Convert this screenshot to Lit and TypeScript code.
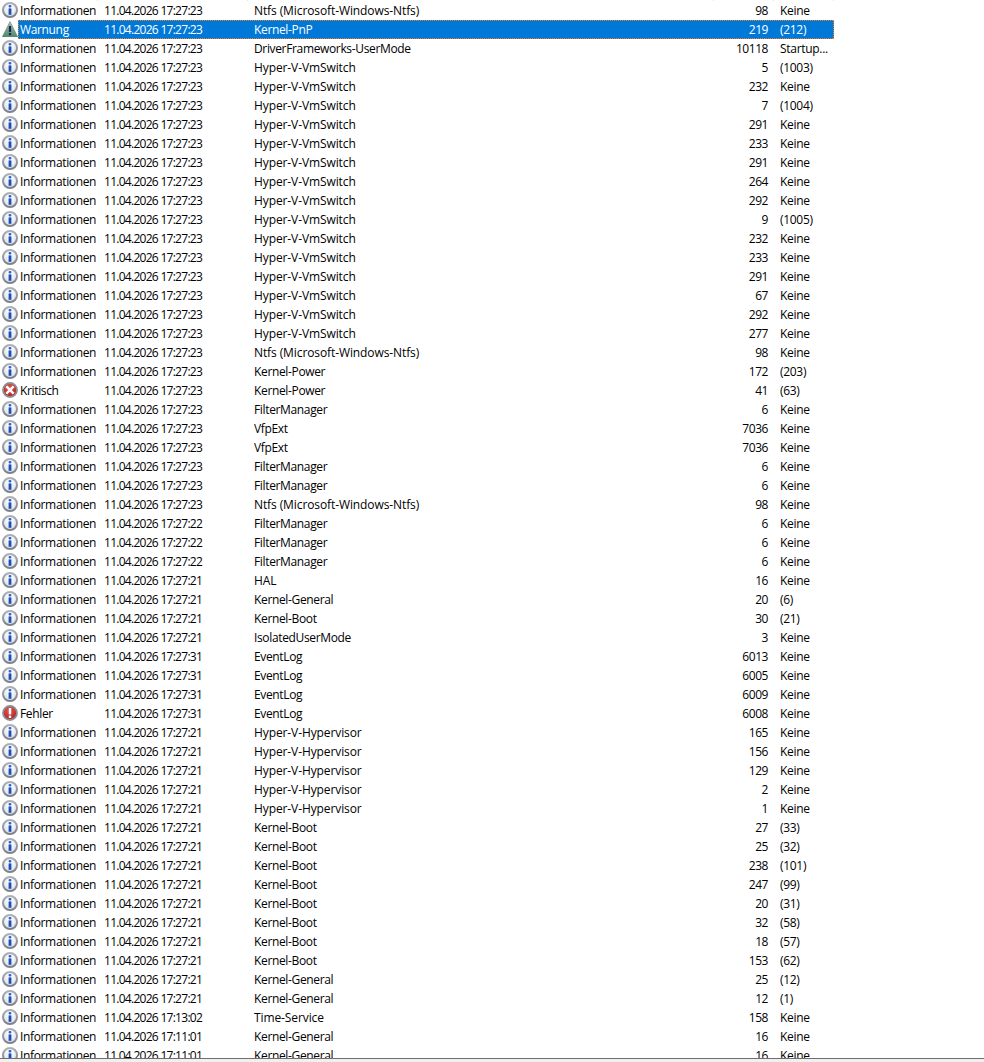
import { LitElement, html, css, svg } from "lit";
import { customElement } from "lit/decorators.js";

type Level = "i" | "w" | "c" | "e";
type Row = [Level, string, string, string, string];

const LABEL: Record<Level, string> = { i: "Informationen", w: "Warnung", c: "Kritisch", e: "Fehler" };
const HV = "Hyper-V-VmSwitch";
const NTFS = "Ntfs (Microsoft-Windows-Ntfs)";
const FM = "FilterManager";
const HY = "Hyper-V-Hypervisor";
const KB = "Kernel-Boot";
const KG = "Kernel-General";
const K = "Keine";
const LOOSE = new Set([HV, NTFS, HY, "Time-Service", "HAL"]);

const rows: Row[] = [
  ["i", "17:27:23", NTFS, "98", K],
  ["w", "17:27:23", "Kernel-PnP", "219", "(212)"],
  ["i", "17:27:23", "DriverFrameworks-UserMode", "10118", "Startup..."],
  ["i", "17:27:23", HV, "5", "(1003)"],
  ["i", "17:27:23", HV, "232", K],
  ["i", "17:27:23", HV, "7", "(1004)"],
  ["i", "17:27:23", HV, "291", K],
  ["i", "17:27:23", HV, "233", K],
  ["i", "17:27:23", HV, "291", K],
  ["i", "17:27:23", HV, "264", K],
  ["i", "17:27:23", HV, "292", K],
  ["i", "17:27:23", HV, "9", "(1005)"],
  ["i", "17:27:23", HV, "232", K],
  ["i", "17:27:23", HV, "233", K],
  ["i", "17:27:23", HV, "291", K],
  ["i", "17:27:23", HV, "67", K],
  ["i", "17:27:23", HV, "292", K],
  ["i", "17:27:23", HV, "277", K],
  ["i", "17:27:23", NTFS, "98", K],
  ["i", "17:27:23", "Kernel-Power", "172", "(203)"],
  ["c", "17:27:23", "Kernel-Power", "41", "(63)"],
  ["i", "17:27:23", FM, "6", K],
  ["i", "17:27:23", "VfpExt", "7036", K],
  ["i", "17:27:23", "VfpExt", "7036", K],
  ["i", "17:27:23", FM, "6", K],
  ["i", "17:27:23", FM, "6", K],
  ["i", "17:27:23", NTFS, "98", K],
  ["i", "17:27:22", FM, "6", K],
  ["i", "17:27:22", FM, "6", K],
  ["i", "17:27:22", FM, "6", K],
  ["i", "17:27:21", "HAL", "16", K],
  ["i", "17:27:21", KG, "20", "(6)"],
  ["i", "17:27:21", KB, "30", "(21)"],
  ["i", "17:27:21", "IsolatedUserMode", "3", K],
  ["i", "17:27:31", "EventLog", "6013", K],
  ["i", "17:27:31", "EventLog", "6005", K],
  ["i", "17:27:31", "EventLog", "6009", K],
  ["e", "17:27:31", "EventLog", "6008", K],
  ["i", "17:27:21", HY, "165", K],
  ["i", "17:27:21", HY, "156", K],
  ["i", "17:27:21", HY, "129", K],
  ["i", "17:27:21", HY, "2", K],
  ["i", "17:27:21", HY, "1", K],
  ["i", "17:27:21", KB, "27", "(33)"],
  ["i", "17:27:21", KB, "25", "(32)"],
  ["i", "17:27:21", KB, "238", "(101)"],
  ["i", "17:27:21", KB, "247", "(99)"],
  ["i", "17:27:21", KB, "20", "(31)"],
  ["i", "17:27:21", KB, "32", "(58)"],
  ["i", "17:27:21", KB, "18", "(57)"],
  ["i", "17:27:21", KB, "153", "(62)"],
  ["i", "17:27:21", KG, "25", "(12)"],
  ["i", "17:27:21", KG, "12", "(1)"],
  ["i", "17:13:02", "Time-Service", "158", K],
  ["i", "17:11:01", KG, "16", K],
  ["i", "17:11:01", KG, "16", K],
];

const defs = svg`
  <defs>
    <linearGradient id="ring" x1="0" y1="0" x2="0" y2="1">
      <stop offset="0" stop-color="#aeb1b5" /><stop offset="1" stop-color="#7c8085" />
    </linearGradient>
    <radialGradient id="face" cx=".5" cy=".3" r=".75">
      <stop offset="0" stop-color="#ffffff" /><stop offset="1" stop-color="#d5dcec" />
    </radialGradient>
    <linearGradient id="tri" x1="0" y1="0" x2="0" y2="1">
      <stop offset="0" stop-color="#b4c0aa" /><stop offset="1" stop-color="#4a8a6a" />
    </linearGradient>
    <radialGradient id="red" cx=".45" cy=".35" r=".7">
      <stop offset="0" stop-color="#e8584f" /><stop offset="1" stop-color="#a81c1c" />
    </radialGradient>
  </defs>`;

function icon(l: Level) {
  let body;
  if (l === "i") {
    body = svg`
      <circle cx="8" cy="8" r="7" fill="url(#face)" stroke="url(#ring)" stroke-width="2" />
      <rect x="6.6" y="3" width="2.8" height="2.6" rx="1.1" fill="#2a62c8" />
      <rect x="6.6" y="6.4" width="2.8" height="6.4" fill="#1c4fb4" />`;
  } else if (l === "w") {
    body = svg`
      <path d="M8 .6 15.8 16H.2Z" fill="url(#tri)" stroke="#6a8c7a" stroke-width=".6" stroke-linejoin="round" />
      <rect x="6.9" y="5" width="2.2" height="6" fill="#14265a" />
      <rect x="6.9" y="12" width="2.2" height="2.2" fill="#14265a" />`;
  } else if (l === "c") {
    body = svg`
      <circle cx="8" cy="8" r="7" fill="url(#red)" stroke="#8b8f94" stroke-width="1.8" />
      <path d="M5.2 5.2l5.6 5.6M10.8 5.2l-5.6 5.6" stroke="#fff" stroke-width="2.4" stroke-linecap="square" />`;
  } else {
    body = svg`
      <circle cx="8" cy="8" r="7" fill="url(#red)" stroke="#8b8f94" stroke-width="1.8" />
      <rect x="6.8" y="3" width="2.4" height="6.4" fill="#fff" />
      <rect x="6.8" y="10.6" width="2.4" height="2.4" fill="#fff" />`;
  }
  return html`<svg class="ico" width="16" height="16" viewBox="0 0 16 16">${body}</svg>`;
}

@customElement("app-root")
export class AppRoot extends LitElement {
  static styles = css`
    :host {
      display: flex;
      flex-direction: column;
      width: 984px;
      height: 1062px;
      background: #fff;
      font-family: "Open Sans", "Noto Sans", sans-serif;
      font-size: 12px;
      color: #000;
      overflow: hidden;
    }
    .defs { position: absolute; width: 0; height: 0; }
    .list {
      flex: 1;
      min-height: 0;
      overflow: hidden;
      border-bottom: 1px solid #6e6e6e;
    }
    .ticks {
      display: grid;
      grid-template-columns: 98px 150px 466px 60px 60px;
      width: 834px;
      height: 1px;
    }
    .ticks i { border-right: 1px solid #e4e4e4; }
    .foot { height: 3px; background: #f0f0f0; flex: none; }
    .row {
      display: flex;
      height: 19px;
      line-height: 19px;
      padding-left: 2px;
    }
    .ico { flex: none; width: 16px; height: 16px; margin-top: 1px; }
    .cells {
      width: 816px;
      display: grid;
      grid-template-columns: 86px 150px 386px 140px 54px;
      white-space: nowrap;
    }
    .cells span { overflow: hidden; }
    .lvl { padding-left: 2px; letter-spacing: -0.35px; }
    .date { letter-spacing: -0.72px; }
    .src { letter-spacing: -0.35px; }
    .src.loose { letter-spacing: -0.1px; }
    .id { text-align: right; letter-spacing: -0.45px; padding-right: 12px; }
    .task { letter-spacing: -0.3px; }
    .sel .cells {
      color: #fff;
      background:
        repeating-linear-gradient(90deg, #f08020 0 1px, transparent 1px 2px) 0 0 / 100% 1px no-repeat,
        repeating-linear-gradient(90deg, #f08020 0 1px, transparent 1px 2px) 0 100% / 100% 1px no-repeat,
        repeating-linear-gradient(0deg, #f08020 0 1px, transparent 1px 2px) 0 0 / 1px 100% no-repeat,
        repeating-linear-gradient(0deg, #f08020 0 1px, transparent 1px 2px) 100% 0 / 1px 100% no-repeat,
        #0078d7;
    }
  `;

  render() {
    return html`
      <svg class="defs">${defs}</svg>
      <div class="list">
        <div class="ticks"><i></i><i></i><i></i><i></i><i></i></div>
        ${rows.map(
          ([l, t, src, id, task], i) => html`
            <div class="row ${i === 1 ? "sel" : ""}">
              ${icon(l)}
              <div class="cells">
                <span class="lvl">${LABEL[l]}</span>
                <span class="date">11.04.2026 ${t}</span>
                <span class="src ${LOOSE.has(src) ? "loose" : ""}">${src}</span>
                <span class="id">${id}</span>
                <span class="task">${task}</span>
              </div>
            </div>
          `
        )}
      </div>
      <div class="foot"></div>
    `;
  }
}
